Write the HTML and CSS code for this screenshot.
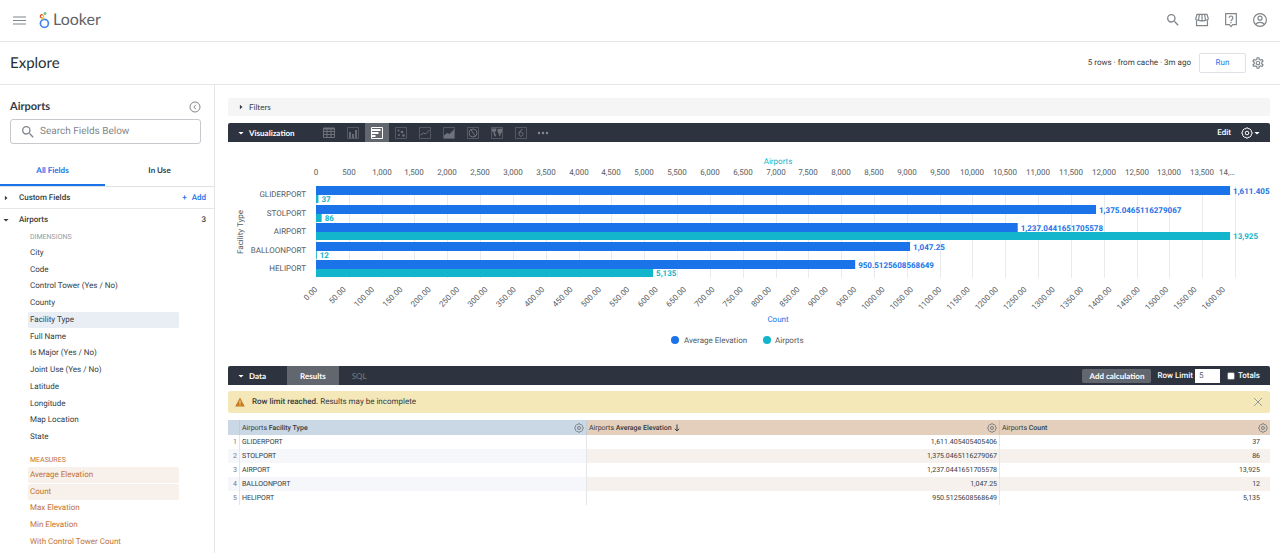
FILE: index.html
```
<!DOCTYPE html>
<html lang="en">
<head>
<meta charset="utf-8">
<meta name="viewport" content="width=device-width, initial-scale=1">
<title>Looker - Explore Airports</title>
<link rel="stylesheet" href="styles.css">
</head>
<body>
<svg class="sprite" aria-hidden="true">
  <symbol id="i-search" viewBox="0 0 24 24"><path fill="currentColor" d="M15.5 14h-.79l-.28-.27A6.47 6.47 0 0 0 16 9.5 6.5 6.5 0 1 0 9.5 16c1.61 0 3.09-.59 4.23-1.57l.27.28v.79l5 4.99L20.49 19l-4.99-5zm-6 0a4.5 4.5 0 1 1 0-9 4.5 4.5 0 0 1 0 9z"/></symbol>
  <symbol id="i-settings" viewBox="0 0 24 24"><path fill="currentColor" d="M19.43 12.98c.04-.32.07-.64.07-.98 0-.34-.03-.66-.07-.98l2.11-1.65c.19-.15.24-.42.12-.64l-2-3.46c-.09-.16-.26-.25-.44-.25-.06 0-.12.01-.17.03l-2.49 1c-.52-.4-1.08-.73-1.69-.98l-.38-2.65C14.46 2.18 14.25 2 14 2h-4c-.25 0-.46.18-.49.42l-.38 2.65c-.61.25-1.17.59-1.69.98l-2.49-1c-.06-.02-.12-.03-.18-.03-.17 0-.34.09-.43.25l-2 3.46c-.13.22-.07.49.12.64l2.11 1.65c-.04.32-.07.65-.07.98 0 .33.03.66.07.98l-2.11 1.65c-.19.15-.24.42-.12.64l2 3.46c.09.16.26.25.44.25.06 0 .12-.01.17-.03l2.49-1c.52.4 1.08.73 1.69.98l.38 2.65c.03.24.24.42.49.42h4c.25 0 .46-.18.49-.42l.38-2.65c.61-.25 1.17-.59 1.69-.98l2.49 1c.06.02.12.03.18.03.17 0 .34-.09.43-.25l2-3.46c.12-.22.07-.49-.12-.64l-2.11-1.65zm-1.98-1.71c.04.31.05.52.05.73 0 .21-.02.43-.05.73l-.14 1.13.89.7 1.08.84-.7 1.21-1.27-.51-1.04-.42-.9.68c-.43.32-.84.56-1.25.73l-1.06.43-.16 1.13-.2 1.35h-1.4l-.19-1.35-.16-1.13-1.06-.43c-.43-.18-.83-.41-1.23-.71l-.91-.7-1.06.43-1.27.51-.7-1.21 1.08-.84.89-.7-.14-1.13c-.03-.31-.05-.54-.05-.74s.02-.43.05-.73l.14-1.13-.89-.7-1.08-.84.7-1.21 1.27.51 1.04.42.9-.68c.43-.32.84-.56 1.25-.73l1.06-.43.16-1.13.2-1.35h1.39l.19 1.35.16 1.13 1.06.43c.43.18.83.41 1.23.71l.91.7 1.06-.43 1.27-.51.7 1.21-1.07.85-.89.7.14 1.13zM12 8c-2.21 0-4 1.79-4 4s1.79 4 4 4 4-1.79 4-4-1.79-4-4-4zm0 6c-1.1 0-2-.9-2-2s.9-2 2-2 2 .9 2 2-.9 2-2 2z"/></symbol>
  <symbol id="i-cog" viewBox="0 0 24 24"><g fill="none" stroke="currentColor" stroke-width="2" stroke-linejoin="round"><path d="M10 2h4l1.2 2 2.3-.4 2.9 2.9-.4 2.3L22 10v4l-2 1.2.4 2.3-2.9 2.9-2.3-.4L14 22h-4l-1.2-2-2.3.4-2.9-2.9.4-2.3L2 14v-4l2-1.2-.4-2.3 2.9-2.9 2.3.4z"/><circle cx="12" cy="12" r="3.6"/></g></symbol>
  <symbol id="i-right" viewBox="0 0 8 8"><path fill="currentColor" d="M2.500 1 6 4 2.500 7z"/></symbol>
  <symbol id="i-down" viewBox="0 0 8 8"><path fill="currentColor" d="M0.500 2.500h7L4 6z"/></symbol>
</svg>

<header class="topbar">
  <button class="icon-btn" aria-label="Menu"><svg class="ic-menu" viewBox="0 0 13 9"><path d="M0 1h13M0 4.5h13M0 8h13" stroke="currentColor" stroke-width="1.2"/></svg></button>
  <a class="brand" href="#">
    <svg class="brand-mark" viewBox="0 0 11 17" fill="none" aria-hidden="true">
      <circle cx="5.4" cy="11.4" r="4" stroke="#4285f4" stroke-width="1.7"/>
      <path d="M3.2 5.9A1.6 1.6 0 1 1 3.8 3" stroke="#ea4335" stroke-width="1.2"/>
      <path d="M3.4 2.8A1.6 1.6 0 0 1 3.8 5.8L3.6 7.6" stroke="#fbbc04" stroke-width="1.2"/>
      <circle cx="6.1" cy="1.5" r="0.9" stroke="#34a853" stroke-width="1"/>
    </svg>
    <span>Looker</span>
  </a>
  <nav class="top-icons">
    <button class="icon-btn" aria-label="Search"><svg class="ic-16" viewBox="0 0 24 24"><use href="#i-search"/></svg></button>
    <button class="icon-btn" aria-label="Marketplace"><svg class="ic-16" viewBox="0 0 24 24" fill="none" stroke="currentColor" stroke-width="1.8"><path d="M4.500 3.500h15l1.800 6v.8a2.200 2.200 0 0 1-4.300.4 2.500 2.500 0 0 1-5 0 2.500 2.500 0 0 1-5 0 2.200 2.200 0 0 1-4.300-.4v-.8zM12 4v6.500M8 4 7 10.500M16 4l1 6.500M3.800 13v7.500h16.400V13"/></svg></button>
    <button class="icon-btn" aria-label="Help"><svg class="ic-16" viewBox="0 0 24 24" fill="none" stroke="currentColor" stroke-width="1.8"><path d="M4 2.500h16v16.500h-5.500L12 21.800 9.500 19H4z"/><path d="M9.200 8.800a2.800 2.800 0 1 1 4.400 2.300c-1 .7-1.600 1.200-1.600 2.500M12 14.800v2"/></svg></button>
    <button class="icon-btn" aria-label="Account"><svg class="ic-16" viewBox="0 0 24 24" fill="none" stroke="currentColor" stroke-width="1.8"><circle cx="12" cy="12" r="9.600"/><circle cx="12" cy="9.300" r="3"/><path d="M5.500 18.500c1.500-2.200 4-3 6.500-3s5 .8 6.500 3"/></svg></button>
  </nav>
</header>

<div class="titlebar">
  <h1 class="page-title">Explore</h1>
  <span class="run-info">5 rows · from cache · 3m ago</span>
  <button class="run-btn">Run</button>
  <button class="icon-btn" aria-label="Explore actions"><svg class="ic-14" viewBox="0 0 24 24"><use href="#i-settings"/></svg></button>
</div>

<div class="layout">
  <aside class="sidebar">
    <div class="side-head">
      <h2 class="side-title">Airports</h2>
      <button class="icon-btn" aria-label="Collapse field picker"><svg class="ic-12" viewBox="0 0 12 12" fill="none" stroke="currentColor"><circle cx="6" cy="6" r="5"/><path d="M6.900 3.800 4.800 6l2.100 2.200"/></svg></button>
    </div>
    <label class="search">
      <svg class="ic-16" viewBox="0 0 24 24"><use href="#i-search"/></svg>
      <input type="text" placeholder="Search Fields Below" aria-label="Search Fields Below">
    </label>
    <div class="tabs" role="tablist">
      <button class="tab tab-on" role="tab" aria-selected="true">All Fields</button>
      <button class="tab" role="tab" aria-selected="false">In Use</button>
    </div>
    <div class="group group-line">
      <svg class="ic-6" viewBox="0 0 8 8"><use href="#i-right"/></svg>
      <span class="group-name">Custom Fields</span>
      <button class="add-btn"><span>+</span><span>Add</span></button>
    </div>
    <div class="group">
      <svg class="ic-6" viewBox="0 0 8 8"><use href="#i-down"/></svg>
      <span class="group-name">Airports</span>
      <span class="group-count">3</span>
    </div>
    <h3 class="kind">DIMENSIONS</h3>
    <ul class="fields dims">
      <li>City</li><li>Code</li><li>Control Tower (Yes / No)</li><li>County</li>
      <li class="picked">Facility Type</li><li>Full Name</li><li>Is Major (Yes / No)</li><li>Joint Use (Yes / No)</li>
      <li>Latitude</li><li>Longitude</li><li>Map Location</li><li>State</li>
    </ul>
    <h3 class="kind kind-measure">MEASURES</h3>
    <ul class="fields measures">
      <li class="picked">Average Elevation</li><li class="picked">Count</li><li>Max Elevation</li><li>Min Elevation</li><li>With Control Tower Count</li>
    </ul>
  </aside>

  <main class="main">
    <button class="filters"><svg class="ic-6" viewBox="0 0 8 8"><use href="#i-right"/></svg><span>Filters</span></button>

    <section>
      <div class="bar">
        <button class="bar-title bar-viz"><svg class="ic-6" viewBox="0 0 8 8"><use href="#i-down"/></svg><span>Visualization</span></button>
        <div class="viz-types">
          <button aria-label="Table"><svg viewBox="0 0 12 12" fill="none" stroke="currentColor"><path d="M.5 1.500h11v9H.5zM.5 4.500h11M.5 7.500h11M4 1.500v9M8 1.500v9"/><path d="M.5 1.500h11" stroke-width="2"/></svg></button>
          <button aria-label="Column"><svg viewBox="0 0 12 12" fill="none" stroke="currentColor"><path d="M.5.5h11v11H.5z" opacity=".6"/><path d="M3 11V5M6 11V7M9 11V3" stroke-width="1.800"/></svg></button>
          <button class="viz-on" aria-label="Bar"><svg viewBox="0 0 12 12" fill="none" stroke="currentColor"><path d="M.5.5h11v11H.5z"/><path d="M1 3h8.500M1 6h6.500M1 9h3.500" stroke-width="2"/></svg></button>
          <button aria-label="Scatter"><svg viewBox="0 0 12 12" fill="currentColor"><path d="M.5.5h11v11H.5z" fill="none" stroke="currentColor" opacity=".6"/><circle cx="3.500" cy="3.500" r="1"/><circle cx="7" cy="5" r="1.300"/><circle cx="4" cy="8" r="1"/><circle cx="8.500" cy="8.500" r="1.300"/></svg></button>
          <button aria-label="Line"><svg viewBox="0 0 12 12" fill="none" stroke="currentColor"><path d="M.5.5h11v11H.5z" opacity=".6"/><path d="m1.500 8 3-2 2 1L10.500 3"/></svg></button>
          <button aria-label="Area"><svg viewBox="0 0 12 12"><path d="M.5.5h11v11H.5z" fill="none" stroke="currentColor" opacity=".6"/><path d="M1 11V8.500L4 6l2.500 1L11 2.500V11z" fill="currentColor"/></svg></button>
          <button aria-label="Pie"><svg viewBox="0 0 12 12" fill="none" stroke="currentColor"><path d="M.5.5h11v11H.5z" opacity=".6"/><circle cx="6" cy="6" r="4"/><path d="M4 2.500 6 6l2.500 3.200"/></svg></button>
          <button aria-label="Map"><svg viewBox="0 0 12 12"><path d="M.5.5h11v11H.5z" fill="none" stroke="currentColor" opacity=".6"/><path d="M1 1.500h4.500L5 4 3.500 5.500 5 7.500 4.200 10 2.800 8 2.500 5.500 1 4zM6.500 2l4.500-.5V5L9.800 6.500 9 9.500 7.800 8 7.500 6 6.500 5z" fill="currentColor"/></svg></button>
          <button aria-label="Single value"><svg viewBox="0 0 12 12" fill="none" stroke="currentColor"><path d="M.5.5h11v11H.5z" opacity=".6"/><path d="M7.600 2.500C5.300 2.900 4 4.800 4 7.200a2 2.100 0 1 0 .2-1"/></svg></button>
          <button class="viz-more" aria-label="More"><svg viewBox="0 0 12 12" fill="currentColor"><circle cx="2" cy="6" r="1.200"/><circle cx="6" cy="6" r="1.200"/><circle cx="10" cy="6" r="1.200"/></svg></button>
        </div>
        <div class="bar-right viz-right">
          <button class="bar-link">Edit</button>
          <button class="icon-btn gear-menu" aria-label="Visualization settings"><svg class="ic-12" viewBox="0 0 24 24"><use href="#i-cog"/></svg><svg class="ic-6" viewBox="0 0 8 8"><use href="#i-down"/></svg></button>
        </div>
      </div>
      <svg class="chart" id="chart" viewBox="0 0 1042 208" role="img" aria-label="Average elevation and airport count by facility type"></svg>
    </section>

    <section class="data">
      <div class="bar">
        <button class="bar-title bar-data"><svg class="ic-6" viewBox="0 0 8 8"><use href="#i-down"/></svg><span>Data</span></button>
        <button class="data-tab data-tab-on">Results</button>
        <button class="data-tab">SQL</button>
        <div class="bar-right">
          <button class="calc-btn">Add calculation</button>
          <label class="limit"><span>Row Limit</span><input type="text" value="5"></label>
          <label class="totals"><input type="checkbox"><span>Totals</span></label>
        </div>
      </div>
      <div class="notice" role="status">
        <svg class="ic-10" viewBox="0 0 10 10"><path d="M5 .5 9.800 9.500H.2z" fill="#c87b1e"/><path d="M5 3.500v3M5 7.300v1" stroke="#f5e8b8"/></svg>
        <p><strong>Row limit reached.</strong> Results may be incomplete</p>
        <button class="icon-btn" aria-label="Dismiss"><svg class="ic-10" viewBox="0 0 10 10"><path d="m1 1 8 8M9 1 1 9" stroke="currentColor" stroke-width=".8"/></svg></button>
      </div>
      <table class="results">
        <colgroup><col class="c-num"><col class="c-type"><col class="c-elev"><col class="c-count"></colgroup>
        <thead>
          <tr>
            <th class="dim"></th>
            <th class="dim"><div class="th"><span>Airports <b>Facility Type</b></span><button class="icon-btn" aria-label="Facility Type options"><svg class="ic-10" viewBox="0 0 24 24"><use href="#i-cog"/></svg></button></div></th>
            <th class="mea"><div class="th"><span>Airports <b>Average Elevation</b></span><svg class="sort" viewBox="0 0 6 8" fill="none" stroke="currentColor"><path d="M3 .5v6.500M.8 4.800 3 7l2.200-2.200"/></svg><button class="icon-btn" aria-label="Average Elevation options"><svg class="ic-10" viewBox="0 0 24 24"><use href="#i-cog"/></svg></button></div></th>
            <th class="mea"><div class="th"><span>Airports <b>Count</b></span><button class="icon-btn" aria-label="Count options"><svg class="ic-10" viewBox="0 0 24 24"><use href="#i-cog"/></svg></button></div></th>
          </tr>
        </thead>
        <tbody>
          <tr><td>1</td><td>GLIDERPORT</td><td>1,611.405405405406</td><td>37</td></tr>
          <tr><td>2</td><td>STOLPORT</td><td>1,375.0465116279067</td><td>86</td></tr>
          <tr><td>3</td><td>AIRPORT</td><td>1,237.0441651705578</td><td>13,925</td></tr>
          <tr><td>4</td><td>BALLOONPORT</td><td>1,047.25</td><td>12</td></tr>
          <tr><td>5</td><td>HELIPORT</td><td>950.5125608568649</td><td>5,135</td></tr>
        </tbody>
      </table>
    </section>
  </main>
</div>
<script src="chart.js"></script>
</body>
</html>
```
FILE: styles.css
```
* { box-sizing: border-box; }

body {
  margin: 0;
  min-height: 100vh;
  display: flex;
  flex-direction: column;
  font: 8px/12px Roboto, "Liberation Sans", sans-serif;
  text-rendering: geometricPrecision;
  color: #343c42;
  background: #fff;
}

h1, h2, h3, p, ul { margin: 0; padding: 0; }
ul { list-style: none; }
svg { display: block; flex: none; }
button, input { font: inherit; color: inherit; margin: 0; text-rendering: inherit; }
button { background: none; border: 0; padding: 0; cursor: pointer; }

.sprite { position: absolute; width: 0; height: 0; }

.icon-btn { display: flex; align-items: center; color: #80868b; }
.ic-6 { width: 6px; height: 6px; }
.ic-10 { width: 10px; height: 10px; }
.ic-12 { width: 12px; height: 12px; }
.ic-14 { width: 14px; height: 14px; }
.ic-16 { width: 16px; height: 16px; }
.ic-menu { width: 13px; height: 9px; }

.topbar {
  display: flex;
  align-items: center;
  height: 42px;
  padding: 0 12px 1px 13px;
  border-bottom: 1px solid #e4e6e9;
}
.brand {
  display: flex;
  align-items: center;
  gap: 3px;
  margin-left: 13px;
  font: 16px/20px Lato, sans-serif;
  color: #5f6368;
  text-decoration: none;
}
.brand-mark { width: 11px; height: 17px; }
.top-icons { display: flex; gap: 13px; margin-left: auto; }

.titlebar {
  display: flex;
  align-items: center;
  height: 43px;
  padding: 0 15px 0 10px;
  border-bottom: 1px solid #e4e6e9;
}
.page-title { font: 15px/20px Lato, sans-serif; color: #262d33; margin-right: auto; }
.run-info { margin-right: 8px; }
.run-btn {
  width: 47px;
  height: 20px;
  margin-right: 5px;
  border: 1px solid #dee1e5;
  border-radius: 2px;
  color: #1a73e8;
}

.layout { flex: 1; display: flex; }

.sidebar { width: 215px; flex: none; border-right: 1px solid #e4e6e9; }
.side-head {
  display: flex;
  align-items: center;
  justify-content: space-between;
  height: 34px;
  padding: 10px 13px 0 10px;
}
.side-title { font: bold 11px/16px Lato, sans-serif; }
.search {
  display: flex;
  align-items: center;
  gap: 4px;
  height: 25px;
  margin: 0 13px 0 10px;
  padding-left: 9px;
  border: 1px solid #c6cacf;
  border-radius: 3px;
  color: #80868b;
}
.search input { flex: 1; min-width: 0; border: 0; outline: 0; padding: 1px 0 0; background: none; font-size: 10px; }
.search input::placeholder { color: #80868b; opacity: 1; }

.tabs { display: grid; grid-template-columns: 105fr 109fr; margin-top: 11px; border-bottom: 1px solid #dee1e5; }
.tab { height: 31px; padding-top: 1px; border-bottom: 2px solid transparent; font: bold 8px/12px Lato, sans-serif; }
.tab-on { color: #1a73e8; border-color: #1a73e8; }

.group { display: flex; align-items: center; height: 21px; padding: 0 8px 0 3px; font-weight: 500; }
.group-line { height: 22px; border-bottom: 1px solid #e4e6e9; }
.group-name { margin: 0 auto 0 10px; }
.add-btn { display: flex; gap: 5px; color: #1a73e8; }

.kind { padding: 1px 0 2px 30px; font: 7px/12px Roboto, sans-serif; color: #939ba5; }
.kind-measure { padding-top: 9px; padding-bottom: 1px; color: #c17234; }
.fields { display: grid; grid-auto-rows: 1fr; row-gap: 1px; margin: 0 35px 0 28px; }
.fields li { display: flex; align-items: center; padding-left: 2px; border-radius: 2px; }
.dims { min-height: 200px; }
.dims .picked { background: #e9eef4; }
.measures { min-height: 83px; color: #c17234; }
.measures .picked { background: #f8f0ea; }

.main { flex: 1; min-width: 0; padding: 13px 10px 0 13px; }

.filters {
  display: flex;
  align-items: center;
  gap: 5px;
  width: 100%;
  height: 18px;
  margin-bottom: 7px;
  padding-left: 10px;
  border-radius: 2px;
  background: #f5f5f5;
  font-family: Lato, sans-serif;
}

.bar {
  display: flex;
  align-items: center;
  height: 19px;
  border-radius: 2px 2px 0 0;
  background: #2e343f;
  color: #fff;
}
.bar-title { display: flex; align-items: center; gap: 5px; padding-left: 10px; font: bold 8px/12px Lato, sans-serif; }
.bar-viz { width: 89px; }
.bar-data { width: 59px; }
.bar-right { display: flex; align-items: center; margin-left: auto; padding-right: 10px; }

.viz-types { display: flex; height: 100%; color: #6d727b; }
.viz-types button { display: grid; place-items: center; width: 24px; height: 100%; }
.viz-types svg { width: 12px; height: 12px; }
.viz-types .viz-on { background: #62666f; color: #fff; }
.viz-types .viz-more { width: 20px; color: #868b93; }

.viz-right { gap: 10px; }
.bar-link { font-weight: 500; }
.gear-menu { gap: 1px; color: #fff; }

.chart { width: 100%; height: auto; font: 8px Roboto, sans-serif; }
.chart .tick { fill: #555b61; }
.chart .grid { stroke: #e9eaec; }
.chart .elev { fill: #1a73e8; }
.chart .count { fill: #12b5cb; }
.chart .value { font-weight: bold; }
.chart .mid { text-anchor: middle; }
.chart .end { text-anchor: end; }

.data { margin-top: 16px; }
.data-tab { height: 100%; padding: 0 13px; font: 8px/12px Lato, sans-serif; color: #777c84; }
.data-tab-on { background: #62666f; color: #fff; font-weight: bold; }
.calc-btn { height: 14px; padding: 0 7px; border-radius: 2px; background: #62666f; font: bold 8px/12px Lato, sans-serif; }
.limit { display: flex; align-items: center; gap: 2px; margin-left: 6px; font-weight: 500; }
.limit input { width: 25px; height: 14px; padding: 0 4px; border: 0; background: #fff; color: #555b61; font-weight: 400; }
.totals { display: flex; align-items: center; gap: 3px; margin-left: 7px; font-weight: 500; }
.totals input {
  appearance: none;
  width: 8px;
  height: 8px;
  border: 1px solid #767676;
  border-radius: 2px;
  background: #fff;
}

.notice {
  display: flex;
  align-items: center;
  gap: 7px;
  height: 22px;
  margin: 6px 0 7px;
  padding: 0 7px;
  border-radius: 2px;
  background: #f5e8b8;
}
.notice p { flex: 1; }
.notice strong { font-weight: 500; }

.results { width: 100%; table-layout: fixed; border-collapse: separate; border-spacing: 0; font-size: 7px; }
.c-num { width: 12px; }
.c-type { width: 347px; }
.c-elev { width: 413px; }
.results th { height: 15px; padding: 0; font-weight: 400; text-align: left; border-right: 1px solid #c2ccd6; }
.results th b { font-weight: 500; }
.results .dim { background: #cad7e4; }
.results .mea { background: #e3cfbc; border-right-color: #d3c0ae; }
.th { display: flex; align-items: center; padding: 0 2px; }
.th .icon-btn { margin-left: auto; color: #666d74; }
.sort { width: 6px; height: 8px; margin-left: 2px; }
.results td { height: 14px; padding: 0 2px; line-height: 12px; border-right: 1px solid #e4e6e9; }
.results td:last-child, .results th:last-child { border-right: 0; }
.results td:nth-child(1) { text-align: right; color: #707781; }
.results td:nth-child(n + 3) { text-align: right; }
.results td:last-child { padding-right: 10px; }
.results tbody tr:nth-child(even) td { background: #f5f7fa; }
.results tbody tr:nth-child(even) td:nth-child(n + 3) { background: #f6f1ed; }
```
FILE: chart.js
```
const rows = [
  ["GLIDERPORT", 1611.405, 37, "1,611.405"],
  ["STOLPORT", 1375.0465, 86, "1,375.0465116279067"],
  ["AIRPORT", 1237.044, 13925, "1,237.0441651705578"],
  ["BALLOONPORT", 1047.25, 12, "1,047.25"],
  ["HELIPORT", 950.5125, 5135, "950.5125608568649"]
];

const chart = document.getElementById("chart");
const plot = { left: 88, right: 1007, top: 44, bottom: 136 };
const step = (plot.right - plot.left) / 28;
const countScale = step / 500;
const elevScale = (13925 * countScale) / 1611.405;

function add(name, attrs, text) {
  const el = document.createElementNS("http://www.w3.org/2000/svg", name);
  for (const key in attrs) el.setAttribute(key, attrs[key]);
  if (text) el.textContent = text;
  chart.appendChild(el);
}

// Top axis and vertical grid
for (let i = 0; i <= 28; i++) {
  const x = plot.left + Math.round(i * step);
  add("line", { class: "grid", x1: x + 0.5, x2: x + 0.5, y1: plot.top, y2: plot.bottom });
  const label = i === 28 ? "14,…" : (i * 500).toLocaleString("en-US");
  add("text", { class: "tick mid", x: i === 28 ? x - 8 : x, y: 33 }, label);
}

// Bottom axis
for (let i = 0; i <= 32; i++) {
  const x = plot.left + i * 50 * elevScale + 2;
  add("text", { class: "tick end", x: 0, y: 0, transform: `translate(${x} 148) rotate(-45)` }, (i * 50).toFixed(2));
}

// Bars with their values
const pitch = (plot.bottom - plot.top + 1) / rows.length;
rows.forEach(([name, elev, count, label], i) => {
  const y = Math.round(plot.top + i * pitch);
  const w1 = elev * elevScale;
  const w2 = count * countScale;
  add("rect", { class: "elev", x: plot.left, y, width: w1, height: 9 });
  add("rect", { class: "count", x: plot.left, y: y + 9, width: w2, height: 8 });
  add("text", { class: "elev value", x: plot.left + w1 + 3, y: y + 8 }, label);
  add("text", { class: "count value", x: plot.left + w2 + 3, y: y + 16 }, count.toLocaleString("en-US"));
  add("text", { class: "tick end", x: 78, y: y + 11 }, name);
});

// Axis titles and legend
add("text", { class: "count mid", x: 550, y: 22 }, "Airports");
add("text", { class: "elev mid", x: 550, y: 180 }, "Count");
add("text", { class: "tick mid", transform: "translate(15 90) rotate(-90)" }, "Facility Type");
add("circle", { class: "elev", cx: 447, cy: 198, r: 4 });
add("text", { class: "tick", x: 456, y: 201 }, "Average Elevation");
add("circle", { class: "count", cx: 539, cy: 198, r: 4 });
add("text", { class: "tick", x: 547, y: 201 }, "Airports");
```
